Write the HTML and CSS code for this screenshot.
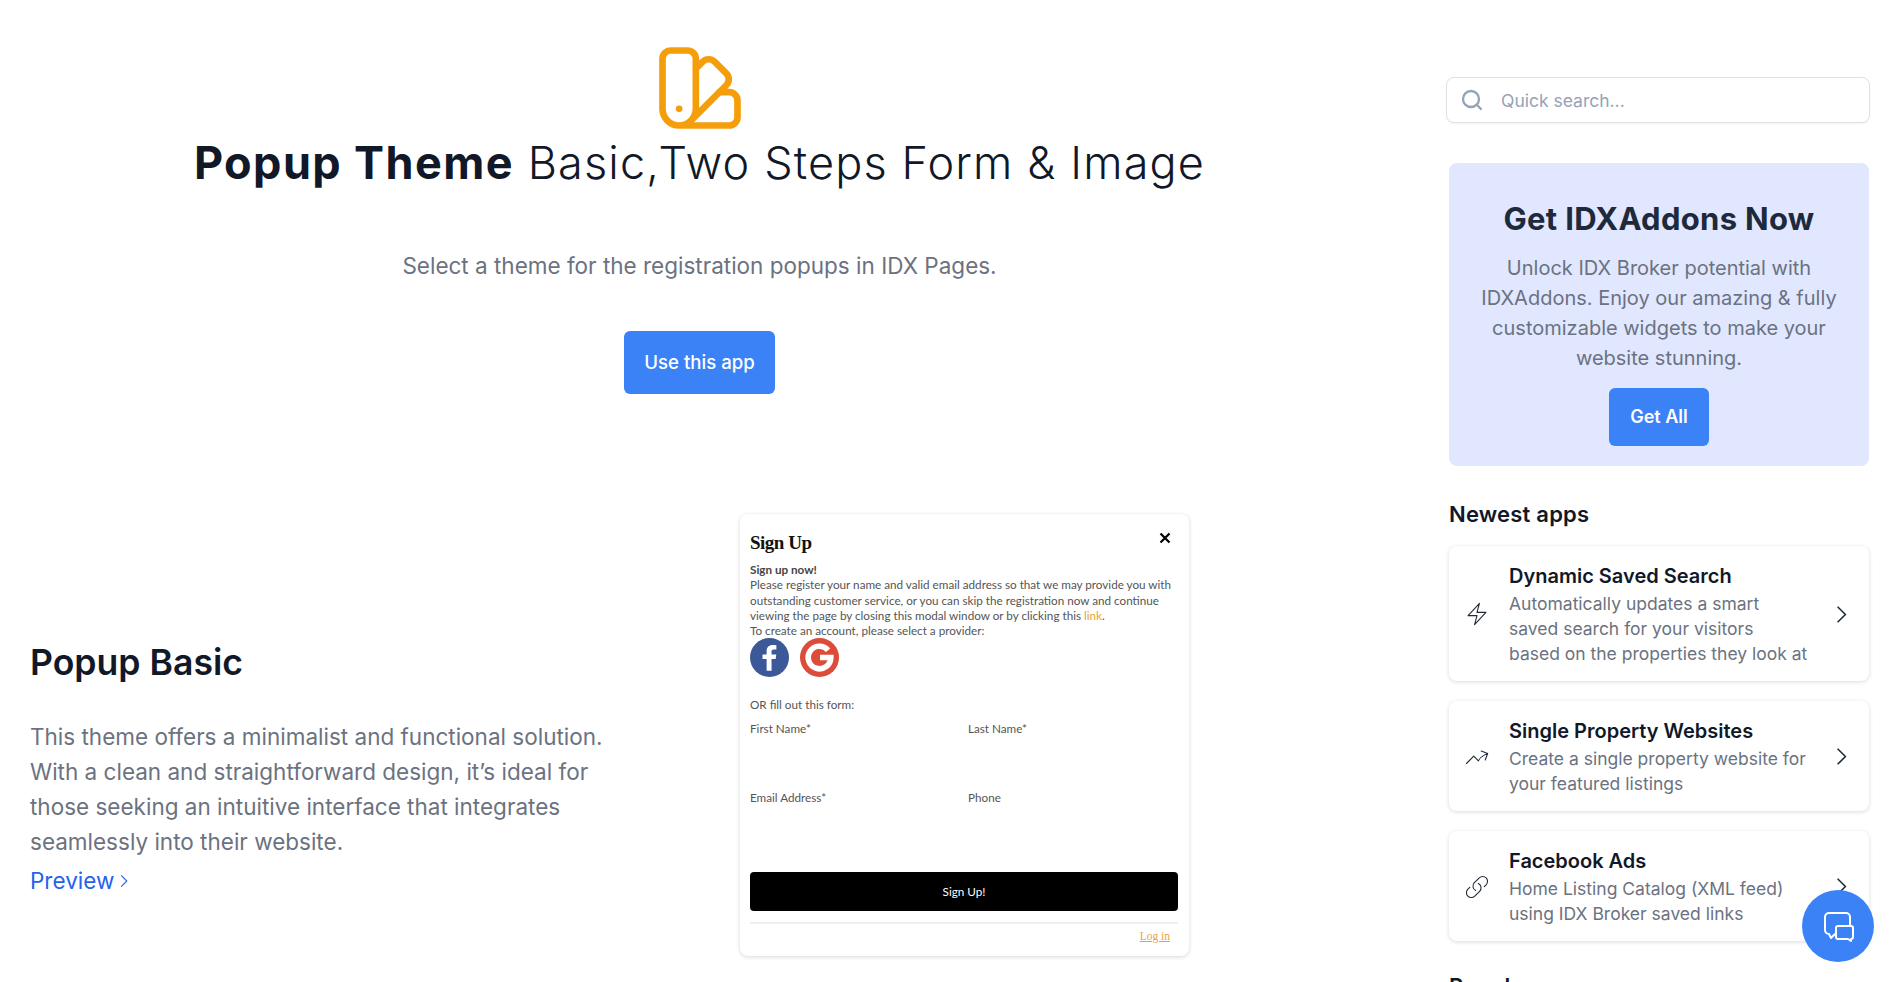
FILE: index.html
```html
<!DOCTYPE html>
<html lang="en">
<head>
    <meta charset="utf-8">
    <title>Popup Theme</title>
    <link rel="stylesheet" href="styles.css">
</head>
<body>

<div class="page">
    <main class="main">
        <header class="hero">
            <svg class="hero-icon" viewBox="0 0 24 24" fill="none" stroke="currentColor" stroke-linecap="round" stroke-linejoin="round">
                <path d="M7 21a4 4 0 01-4-4V5a2 2 0 012-2h4a2 2 0 012 2v12a4 4 0 01-4 4zm0 0h12a2 2 0 002-2v-4a2 2 0 00-2-2h-2.343M11 7.343l1.657-1.657a2 2 0 012.828 0l2.829 2.829a2 2 0 010 2.828l-8.486 8.485M7 17h.01"/>
            </svg>
            <h1 class="hero-title"><strong>Popup Theme</strong> Basic,Two Steps Form &amp; Image</h1>
            <p class="hero-sub">Select a theme for the registration popups in IDX Pages.</p>
            <a class="btn btn-hero" href="#">Use this app</a>
        </header>

        <section class="theme">
            <div class="theme-text">
                <h2>Popup Basic</h2>
                <p>This theme offers a minimalist and functional solution. With a clean and straightforward design, it’s ideal for those seeking an intuitive interface that integrates seamlessly into their website.</p>
                <a class="preview" href="#">Preview
                    <svg viewBox="0 0 24 24" fill="none" stroke="currentColor" stroke-width="1.5"><path d="M8.25 4.5l7.5 7.5-7.5 7.5"/></svg>
                </a>
            </div>

            <div class="popup">
                <div class="popup-head">
                    <h3>Sign Up</h3>
                    <svg class="popup-close" viewBox="0 0 12 12" fill="none" stroke="#000" stroke-width="2.2"><path d="M1.5 1.5l9 9M10.5 1.5l-9 9"/></svg>
                </div>
                <p class="popup-copy"><b>Sign up now!</b><br>Please register your name and valid email address so that we may provide you with<br>outstanding customer service, or you can skip the registration now and continue<br>viewing the page by closing this modal window or by clicking this <a href="#">link</a>.<br>To create an account, please select a provider:</p>
                <div class="providers">
                    <svg viewBox="0 0 38 38"><circle cx="19" cy="19" r="19" fill="#3b5998"/><path d="M21 32V20.500h4l.6-4.500H21v-2.700c0-1.300.4-2.200 2.200-2.200h2.500v-4c-.4 0-1.900-.2-3.600-.2-3.500 0-5.900 2.200-5.900 6V16h-4v4.500h4V32z" fill="#fff"/></svg>
                    <svg viewBox="0 0 38 38"><circle cx="19" cy="19" r="19" fill="#dd4b39"/><path d="M27.400 11.900A11 11 0 1 0 30 19H19.500" fill="none" stroke="#fff" stroke-width="5.500"/></svg>
                </div>
                <p class="popup-or">OR fill out this form:</p>
                <div class="popup-fields">
                    <span>First Name*</span>
                    <span>Last Name*</span>
                    <span>Email Address*</span>
                    <span>Phone</span>
                </div>
                <div class="popup-btn">Sign Up!</div>
                <div class="popup-foot"><a href="#">Log in</a></div>
            </div>
        </section>
    </main>

    <aside class="side">
        <label class="search">
            <svg viewBox="0 0 24 24" fill="none" stroke="currentColor" stroke-width="2.300" stroke-linecap="round"><circle cx="11" cy="11" r="8"/><path d="M21 21l-4.300-4.300"/></svg>
            <span>Quick search...</span>
        </label>

        <div class="promo">
            <h2>Get IDXAddons Now</h2>
            <p>Unlock IDX Broker potential with IDXAddons. Enjoy our amazing &amp; fully customizable widgets to make your website stunning.</p>
            <a class="btn btn-promo" href="#">Get All</a>
        </div>

        <h3 class="side-title">Newest apps</h3>

        <a class="app" href="#">
            <svg class="app-icon" viewBox="0 0 24 24" fill="none" stroke="currentColor" stroke-width="1" stroke-linecap="round" stroke-linejoin="round"><path d="M3.750 13.500l10.500-11.250L12 10.500h8.250L9.750 21.750 12 13.500H3.750z"/></svg>
            <div class="app-body">
                <h4>Dynamic Saved Search</h4>
                <p>Automatically updates a smart<br>saved search for your visitors<br>based on the properties they look at</p>
            </div>
            <svg class="app-arrow" viewBox="0 0 24 24" fill="none" stroke="currentColor" stroke-width="1.500"><path d="M8.250 4.500l7.500 7.500-7.500 7.500"/></svg>
        </a>

        <a class="app" href="#">
            <svg class="app-icon" viewBox="0 0 24 24" fill="none" stroke="currentColor" stroke-width="1" stroke-linecap="round" stroke-linejoin="round"><path d="M2.250 18L9 11.250l4.306 4.307a11.950 11.950 0 015.814-5.519l2.740-1.220m0 0l-5.940-2.280m5.940 2.280l-2.280 5.941"/></svg>
            <div class="app-body">
                <h4>Single Property Websites</h4>
                <p>Create a single property website for<br>your featured listings</p>
            </div>
            <svg class="app-arrow" viewBox="0 0 24 24" fill="none" stroke="currentColor" stroke-width="1.500"><path d="M8.250 4.500l7.500 7.500-7.500 7.500"/></svg>
        </a>

        <a class="app" href="#">
            <svg class="app-icon" viewBox="0 0 24 24" fill="none" stroke="currentColor" stroke-width="1" stroke-linecap="round" stroke-linejoin="round"><path d="M13.190 8.688a4.500 4.500 0 011.242 7.244l-4.500 4.500a4.500 4.500 0 01-6.364-6.364l1.757-1.757m13.350-.622l1.757-1.757a4.500 4.500 0 00-6.364-6.364l-4.500 4.500a4.500 4.500 0 001.242 7.244"/></svg>
            <div class="app-body">
                <h4>Facebook Ads</h4>
                <p>Home Listing Catalog (XML feed)<br>using IDX Broker saved links</p>
            </div>
            <svg class="app-arrow" viewBox="0 0 24 24" fill="none" stroke="currentColor" stroke-width="1.500"><path d="M8.250 4.500l7.500 7.500-7.500 7.500"/></svg>
        </a>

        <h3 class="side-title side-title-next">Popular</h3>
    </aside>
</div>

<a class="chat" href="#">
    <svg viewBox="0 0 36 36" fill="none" stroke="#fff" stroke-width="2" stroke-linecap="round" stroke-linejoin="round">
        <path d="M30 17V9a4 4 0 00-4-4H9a4 4 0 00-4 4v13a4 4 0 004 4l2 4 4-4"/>
        <path d="M18 18h13a2 2 0 012 2v9a2 2 0 01-2 2v2l-3-2h-10a2 2 0 01-2-2v-9a2 2 0 012-2z"/>
    </svg>
</a>

</body>
</html>
```

FILE: styles.css
```css
* {
    box-sizing: border-box;
}

html, body {
    height: 982px;
    overflow: hidden;
}

body {
    margin: 0;
    font-family: Inter, "Liberation Sans", sans-serif;
    background: #fff;
    color: #111827;
}

h1, h2, h3, h4, p {
    margin: 0;
}

a {
    text-decoration: none;
}

.page {
    display: flex;
    padding-right: 22px;
}

.main {
    width: 1447px;
    flex: none;
    padding: 38px 78px 0 30px;
}

/* hero */
.hero {
    display: flex;
    flex-direction: column;
    align-items: center;
}

.hero-icon {
    width: 100px;
    height: 100px;
    color: #f59e0b;
    stroke-width: 1.6;
    display: block;
}

.hero-title {
    font-size: 45px;
    line-height: 50px;
    font-weight: 300;
    letter-spacing: 1.150px;
    white-space: nowrap;
}

.hero-title strong {
    font-weight: 700;
    letter-spacing: 1.400px;
}

.hero-sub {
    font-size: 22.5px;
    line-height: 32px;
    font-weight: 400;
    color: #6b7280;
    margin-top: 62px;
}

.btn {
    display: inline-block;
    background: #3b82f6;
    color: #fff;
    font-weight: 500;
    border-radius: 6px;
    text-align: center;
}

.btn-hero {
    width: 151px;
    height: 63px;
    line-height: 62px;
    font-size: 18.600px;
    margin-top: 49px;
}

/* theme row */
.theme {
    display: flex;
    align-items: center;
    justify-content: space-between;
    margin-top: 120px;
    padding-right: 180px;
}

.theme-text {
    width: 600px;
    padding-top: 70px;
}

.theme-text h2 {
    font-size: 35.6px;
    line-height: 44px;
    font-weight: 600;
}

.theme-text p {
    font-size: 22.5px;
    line-height: 35px;
    font-weight: 400;
    color: #6b7280;
    margin-top: 34px;
}

.preview {
    display: inline-flex;
    align-items: center;
    gap: 1px;
    font-size: 22.5px;
    line-height: 36px;
    font-weight: 400;
    color: #2563eb;
    margin-top: 4px;
}

.preview svg {
    width: 18px;
    height: 18px;
}

/* the popup preview */
.popup {
    width: 449px;
    height: 442px;
    background: #fff;
    border-radius: 8px;
    box-shadow: 0 1px 4px rgba(0, 0, 0, 0.16);
    padding: 16px 11px 0 10px;
    font-family: Lato, "Open Sans", sans-serif;
    font-size: 11.700px;
    line-height: 15.300px;
    color: #555;
}

.popup-head {
    display: flex;
    justify-content: space-between;
    align-items: flex-start;
    height: 32px;
    padding-right: 7px;
}

.popup-head h3 {
    font-family: "Liberation Serif", serif;
    font-size: 19px;
    line-height: 26px;
    font-weight: 700;
    letter-spacing: -0.5px;
    color: #111;
}

.popup-close {
    width: 12px;
    height: 12px;
    margin-top: 2px;
}

.popup-copy {
    white-space: nowrap;
}

.popup-copy b {
    font-weight: 700;
    color: #444;
}

.popup-copy a {
    color: #e8a33d;
}

.providers {
    display: flex;
    gap: 11px;
}

.providers svg {
    width: 39px;
    height: 39px;
}

.popup-or {
    margin-top: 20px;
}

.popup-fields {
    display: grid;
    grid-template-columns: 218px 1fr;
    grid-auto-rows: 69px;
    margin-top: 8px;
}

.popup-btn {
    height: 39px;
    line-height: 39px;
    background: #000;
    color: #fff;
    border-radius: 4px;
    text-align: center;
    margin-top: 13px;
}

.popup-foot {
    border-top: 2px solid #eee;
    margin-top: 11px;
    padding: 4px 8px 0 0;
    text-align: right;
}

.popup-foot a {
    color: #e8a33d;
    text-decoration: underline;
    font-family: "Liberation Serif", serif;
    font-size: 11.500px;
}

/* sidebar */
.side {
    width: 422px;
    padding-top: 77px;
    flex: none;
}

.search {
    display: flex;
    align-items: center;
    gap: 17px;
    height: 46px;
    margin: 0 -1px;
    border: 1px solid #e0e0e0;
    border-radius: 8px;
    padding-left: 13px;
    font-size: 17.5px;
    color: #94a3b8;
    box-shadow: 0 1px 2px rgba(0, 0, 0, 0.05);
}

.search svg {
    width: 24px;
    height: 24px;
}

.promo {
    margin: 40px 0 0 2px;
    height: 303px;
    background: #e0e7ff;
    border-radius: 8px;
    padding: 35px 24px 0;
    text-align: center;
}

.promo h2 {
    font-size: 31px;
    line-height: 42px;
    font-weight: 700;
    letter-spacing: 0.3px;
    color: #1e293b;
}

.promo p {
    font-size: 20px;
    line-height: 30px;
    font-weight: 400;
    color: #6b7280;
    margin-top: 13px;
}

.btn-promo {
    width: 100px;
    height: 58px;
    line-height: 58px;
    font-size: 18px;
    font-weight: 600;
    margin-top: 15px;
}

.side-title {
    margin: 32px 0 0 2px;
    font-size: 22px;
    line-height: 32px;
    font-weight: 600;
    letter-spacing: 0.2px;
    color: #111827;
}

.side-title-next {
    margin-top: 29px;
}

.app {
    display: flex;
    align-items: center;
    margin: 16px 0 0 2px;
    padding: 16px 15px 15px 15px;
    background: #fff;
    border-radius: 8px;
    box-shadow: 0 1px 4px rgba(0, 0, 0, 0.15);
}

.app + .app {
    margin-top: 20px;
}

.app-icon {
    width: 26px;
    height: 26px;
    color: #1f2937;
    flex: none;
}

.app-body {
    flex: 1;
    margin-left: 19px;
}

.app-body h4 {
    font-size: 20px;
    line-height: 28px;
    font-weight: 600;
    margin-bottom: 1px;
    color: #111827;
}

.app-body p {
    font-size: 17.500px;
    line-height: 25px;
    color: #6b7280;
}

.app-arrow {
    width: 25px;
    height: 25px;
    color: #1f2937;
    flex: none;
}

.chat {
    position: fixed;
    left: 1802px;
    top: 890px;
    width: 72px;
    height: 72px;
    border-radius: 50%;
    background: #3b82f6;
    display: flex;
    align-items: center;
    justify-content: center;
}

.chat svg {
    width: 36px;
    height: 36px;
}
```
